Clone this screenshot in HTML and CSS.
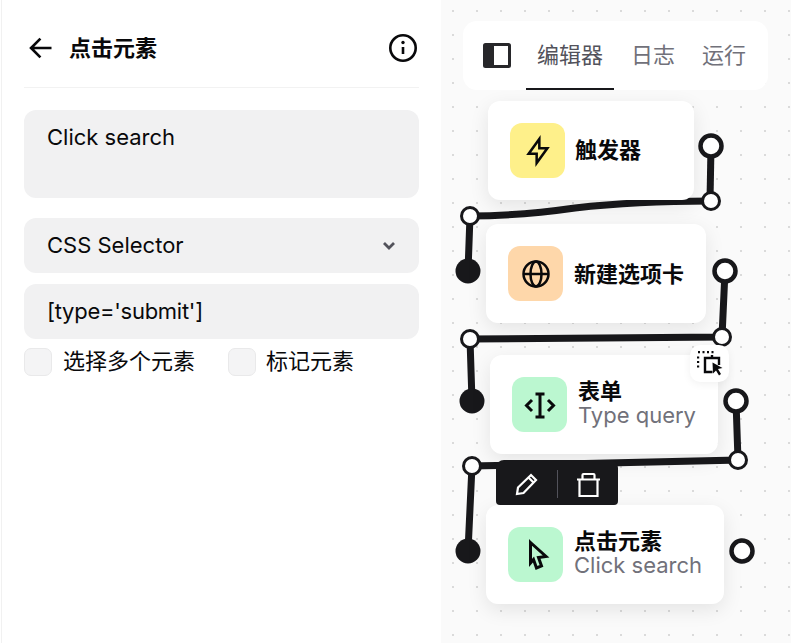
FILE: index.html
```html
<!DOCTYPE html>
<html lang="zh-CN">
<head>
<meta charset="utf-8">
<title>点击元素</title>
<link rel="stylesheet" href="styles.css">
</head>
<body>
<div class="app">
  <aside class="panel">
    <header class="panel-head">
      <svg class="back-icon" viewBox="0 0 24 24" width="28" height="28"><path d="M21 12H3.500M11.500 4 3.500 12l8 8"/></svg>
      <h1 class="panel-title">点击元素</h1>
      <svg class="info-icon" viewBox="0 0 30 30" width="30" height="30"><circle cx="15" cy="15" r="12.700"/><path d="M15 14v7"/><circle class="info-dot" cx="15" cy="9.500" r="1.700"/></svg>
    </header>
    <div class="field field-area">Click search</div>
    <div class="field field-select">
      <span>CSS Selector</span>
      <svg class="chevron" viewBox="0 0 14 10" width="14" height="10"><path d="M2 2l5 5 5-5"/></svg>
    </div>
    <div class="field field-input">[type='submit']</div>
    <div class="checks">
      <label class="check"><span class="box"></span>选择多个元素</label>
      <label class="check check-mark"><span class="box"></span>标记元素</label>
    </div>
  </aside>

  <main class="canvas">
    <nav class="toolbar">
      <svg class="toggle-icon" viewBox="0 0 28 25" width="28" height="25"><rect class="toggle-frame" x="1.500" y="1.500" width="25" height="22" rx="1"/><rect class="toggle-fill" x="1" y="1" width="10" height="23"/></svg>
      <div class="tabs">
        <a class="tab tab-active">编辑器</a>
        <a class="tab">日志</a>
        <a class="tab">运行</a>
      </div>
    </nav>

    <svg class="wires" viewBox="441 0 350 643" width="350" height="643">
      <g class="wire">
        <path d="M711 146 710 201"/>
        <path d="M710 201C650 201 610 204 575 208 540 213 505 216 470 216L468 271"/>
        <path d="M725 271 722 337 470 339 472 401"/>
        <path d="M736 401 738 460 472 466 468 551"/>
      </g>
      <g class="port-in">
        <circle cx="468" cy="271" r="12.500"/>
        <circle cx="472" cy="401" r="12.500"/>
        <circle cx="468" cy="551" r="12.500"/>
      </g>
      <g class="port-out">
        <circle cx="711" cy="146" r="10.500"/>
        <circle cx="725" cy="271" r="10.500"/>
        <circle cx="736" cy="401" r="10.500"/>
        <circle cx="742" cy="551" r="10.500"/>
      </g>
      <g class="port-joint">
        <circle cx="470" cy="216" r="8.500"/>
        <circle cx="711" cy="201" r="8.500"/>
        <circle cx="470" cy="339" r="8.500"/>
        <circle cx="722" cy="337" r="8.500"/>
        <circle cx="472" cy="466" r="8.500"/>
        <circle cx="738" cy="460" r="8.500"/>
      </g>
    </svg>

    <section class="node node-trigger">
      <div class="node-icon icon-yellow">
        <svg viewBox="0 0 24 24" width="32" height="32"><path d="M13 3v7h6l-8 11v-7H5l8-11z"/></svg>
      </div>
      <div class="node-text node-text-lift"><div class="node-title">触发器</div></div>
    </section>

    <section class="node node-tab">
      <div class="node-icon icon-orange">
        <svg viewBox="0 0 32 32" width="32" height="32"><circle cx="16" cy="16" r="12.500"/><path d="M3.500 16h25"/><ellipse cx="16" cy="16" rx="5.500" ry="12.500"/></svg>
      </div>
      <div class="node-text"><div class="node-title">新建选项卡</div></div>
    </section>

    <section class="node node-form">
      <div class="node-icon icon-green">
        <svg class="beam-icon" viewBox="0 0 32 32" width="32" height="32"><path d="M11.500 5h9M11.500 28h9M16 5v23M8 11 2.500 16.500 8 22M24 11l5.500 5.500L24 22"/></svg>
      </div>
      <div class="node-text node-text-two">
        <div class="node-title">表单</div>
        <div class="node-sub">Type query</div>
      </div>
    </section>

    <button class="select-btn">
      <svg viewBox="0 0 26 26" width="26" height="26">
        <path class="dots" d="M1 1h2M5.500 1h2M10 1h2M14.500 1h2M1 5.500v2M1 10v2M1 14.500v2"/>
        <path class="frame" d="M15.500 21H8V7h14v7M15 7V4"/>
        <path class="arrow" d="M15.500 11.500l10 5.500-4.500 1 3 5-2 1.500-3-5-3 3z"/>
      </svg>
    </button>

    <div class="actions">
      <button class="action">
        <svg viewBox="0 0 26 26" width="26" height="26"><path d="M4 23l1-6.500L18 4l5 5L10.500 22z"/><path d="M15.500 6.500l5 5"/></svg>
      </button>
      <span class="action-sep"></span>
      <button class="action">
        <svg viewBox="0 0 26 26" width="26" height="26"><path d="M2 8.500h23M4.500 8.500V25h18V8.500M7.500 8.500V4c0-.7.500-1 1-1h10c.500 0 1 .3 1 1v4.500"/></svg>
      </button>
    </div>

    <section class="node node-click">
      <div class="node-icon icon-green">
        <svg class="cursor-icon" viewBox="0 0 32 32" width="32" height="32"><path d="M10.500 3.500 26 17.500l-7.500 1L21.500 27l-5 2-3-8.500-3 3.500z"/></svg>
      </div>
      <div class="node-text node-text-two">
        <div class="node-title">点击元素</div>
        <div class="node-sub">Click search</div>
      </div>
    </section>
  </main>
</div>
</body>
</html>
```

FILE: styles.css
```css
* { box-sizing: border-box; }

html, body {
  margin: 0;
  height: 100%;
  background: #fff;
  overflow: hidden;
}

body {
  font-family: "Inter", "Noto Sans CJK SC", sans-serif;
  font-size: 22px;
  color: #09090b;
}

.app {
  display: flex;
  width: 791px;
  height: 643px;
  padding-left: 1px;
}

/* Left panel */
.panel {
  width: 440px;
  flex: none;
  border-left: 1px solid #f1f1f1;
  padding: 0 22px;
  display: flex;
  flex-direction: column;
}

.panel-head {
  height: 88px;
  flex: none;
  display: flex;
  align-items: center;
  border-bottom: 1px solid #f2f2f2;
  margin-bottom: 22px;
  padding-left: 3px;
  padding-top: 9px;
}

.back-icon { fill: none; stroke: #09090b; stroke-width: 2.300; flex: none; }

.panel-title {
  margin: 0 0 0 14px;
  font-size: 22px;
  font-weight: 700;
  line-height: 30px;
  flex: 1;
}

.info-icon { fill: none; stroke: #09090b; stroke-width: 2.600; flex: none; margin-right: 1px; }
.info-dot { fill: #09090b; stroke: none; }

.field {
  background: #f1f1f2;
  border-radius: 12px;
  padding: 0 23px 2px;
  height: 55px;
  display: flex;
  align-items: center;
  flex: none;
  line-height: 26px;
}

.field-area {
  height: 88px;
  align-items: flex-start;
  padding-top: 14px;
  margin-bottom: 20px;
}

.field-select {
  justify-content: space-between;
  margin-bottom: 11px;
}

.chevron { fill: none; stroke: #52525b; stroke-width: 2.800; margin-top: 2px; }

.field-input { margin-bottom: 9px; letter-spacing: -0.270px; }

.checks { display: flex; gap: 33px; }

.check { display: flex; align-items: flex-start; gap: 11px; line-height: 26px; }
.check-mark { gap: 10px; }

.box {
  width: 28px;
  height: 28px;
  background: #f4f4f5;
  border: 1px solid #e9e9ea;
  border-radius: 7px;
}

/* Canvas */
.canvas {
  position: relative;
  flex: 1;
  padding: 21px 23px 0 22px;
  background-color: #fafafa;
  background-image: radial-gradient(circle, #dadada 1px, transparent 1.300px);
  background-size: 24px 24px;
  background-position: 0 -1px;
}

.toolbar {
  position: relative;
  z-index: 3;
  height: 69px;
  width: 305px;
  background: #fff;
  border-radius: 14px;
  padding-left: 20px;
  display: flex;
  align-items: stretch;
  gap: 15px;
}

.toggle-icon { align-self: center; margin-bottom: 1px; }
.toggle-frame { fill: #fff; stroke: #27272a; stroke-width: 3; }
.toggle-fill { fill: #27272a; }

.tabs { display: flex; gap: 7px; }

.tab {
  display: flex;
  align-items: center;
  padding: 0 10px 3px;
  color: #71717a;
  border-bottom: 2px solid transparent;
}

.tab-active {
  padding: 0 11px 3px;
  color: #52525b;
  border-bottom-color: #18181b;
}

.wires { position: absolute; left: 0; top: 0; z-index: 1; }
.wire path { fill: none; stroke: #18181b; stroke-width: 7; }
.port-in circle { fill: #18181b; }
.port-out circle { fill: #fff; stroke: #18181b; stroke-width: 4.500; }
.port-joint circle { fill: #fff; stroke: #18181b; stroke-width: 3; }

.node {
  position: absolute;
  z-index: 2;
  height: 99px;
  background: #fff;
  border-radius: 12px;
  box-shadow: 0 6px 20px rgba(0, 0, 0, 0.09);
  padding: 22px;
  display: flex;
  align-items: center;
  gap: 10px;
}

.node-trigger { left: 47px; top: 101px; width: 206px; }
.node-tab { left: 45px; top: 224px; width: 220px; gap: 11px; }
.node-form { left: 49px; top: 355px; width: 228px; gap: 11px; }
.node-click { left: 45px; top: 505px; width: 238px; gap: 11px; }

.node-icon {
  width: 55px;
  height: 55px;
  flex: none;
  border-radius: 12px;
  display: flex;
  align-items: center;
  justify-content: center;
}

.node-icon svg { fill: none; stroke: #09090b; stroke-width: 2.500; }
.icon-yellow svg { stroke-width: 1.900; }
.node-icon .beam-icon { stroke-width: 3; }
.node-icon .cursor-icon { stroke-width: 3; }
.icon-yellow { background: #fef08a; }
.icon-orange { background: #fed7aa; }
.icon-green { background: #bbf7d0; }

.node-text { line-height: 24px; min-width: 0; white-space: nowrap; }
.node-text-lift { padding-bottom: 2px; }
.node-text-two { padding-bottom: 3px; }
.node-title { font-weight: 700; }
.node-sub { color: #71717a; }

.select-btn {
  position: absolute;
  z-index: 3;
  left: 249px;
  top: 345px;
  width: 39px;
  height: 37px;
  padding: 0;
  border: 0;
  border-radius: 10px;
  background: #fff;
  box-shadow: 0 2px 8px rgba(0, 0, 0, 0.06);
  display: flex;
  align-items: center;
  justify-content: center;
}

.select-btn svg { fill: none; stroke: #09090b; stroke-width: 2.400; }
.select-btn .arrow { fill: #09090b; stroke: none; }

.actions {
  position: absolute;
  z-index: 3;
  left: 55px;
  top: 460px;
  width: 122px;
  height: 45px;
  background: #18181b;
  border-radius: 8px 8px 4px 4px;
  display: flex;
  align-items: center;
  justify-content: space-between;
  padding: 3px 17px 0 17px;
}

.action {
  padding: 0;
  border: 0;
  background: none;
  display: flex;
}

.action svg { fill: none; stroke: #fff; stroke-width: 2.200; }

.action-sep { width: 1px; height: 28px; background: #52525b; }
```
